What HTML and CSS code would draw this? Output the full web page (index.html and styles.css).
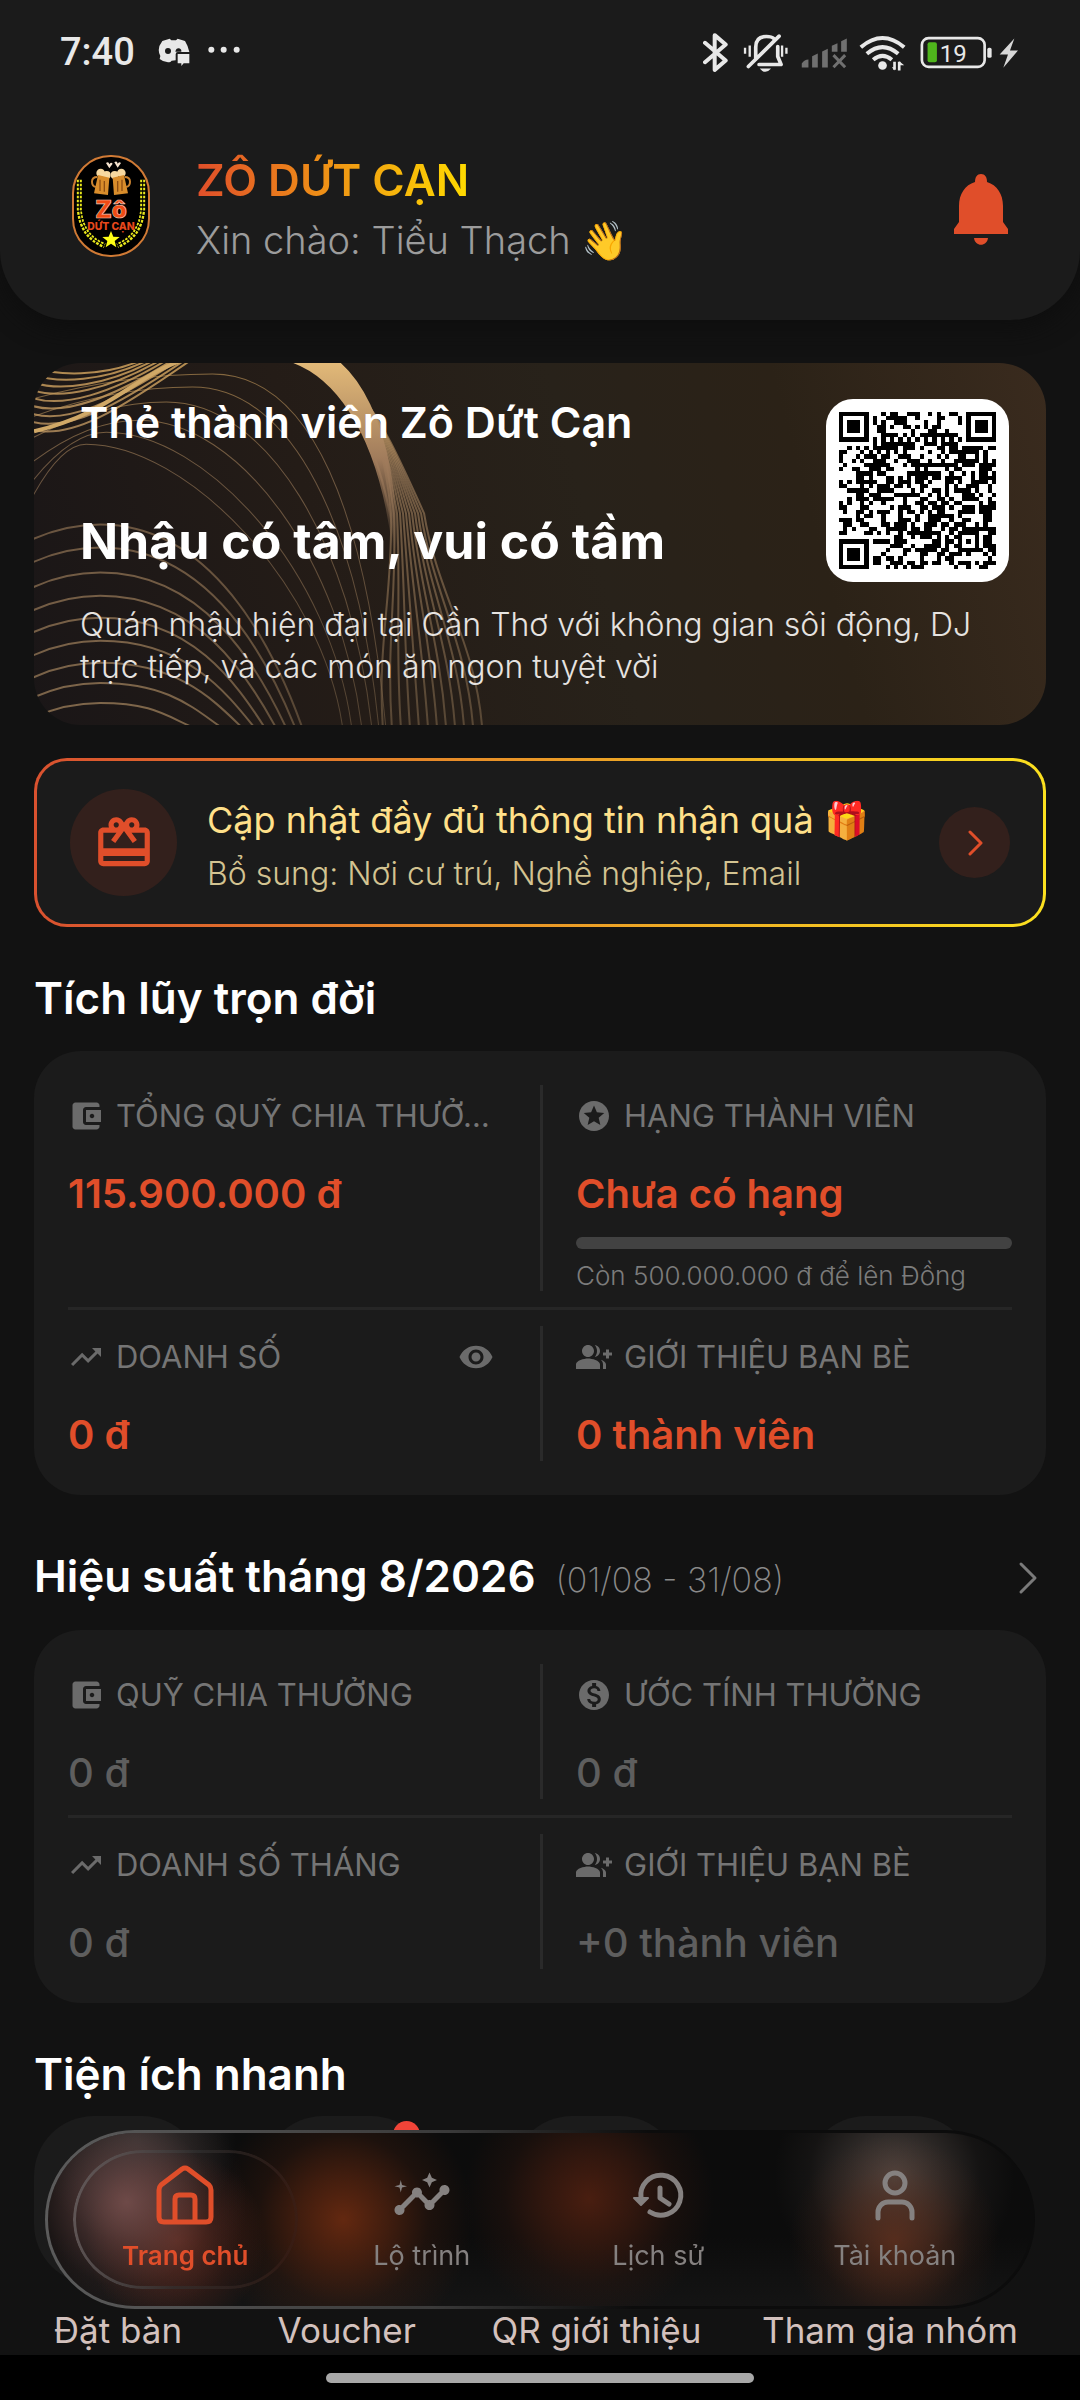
FILE: index.html
```
<!DOCTYPE html>
<html lang="vi">
<head>
<meta charset="utf-8">
<meta name="viewport" content="width=device-width, initial-scale=1">
<title>Zô Dứt Cạn</title>
<link rel="stylesheet" href="styles.css">
</head>
<body>
<svg class="sprite" aria-hidden="true">
  <symbol id="i-wallet" viewBox="0 0 24 24"><path d="M21 18v1c0 1.100-.9 2-2 2H5c-1.110 0-2-.9-2-2V5c0-1.100.89-2 2-2h14c1.100 0 2 .9 2 2v1h-9c-1.110 0-2 .9-2 2v8c0 1.100.89 2 2 2h9zm-9-2h10V8H12v8zm4-2.500c-.83 0-1.500-.67-1.500-1.500s.67-1.500 1.500-1.500 1.500.67 1.500 1.500-.67 1.500-1.500 1.500z"/></symbol>
  <symbol id="i-star" viewBox="0 0 24 24"><path d="M11.990 2C6.470 2 2 6.480 2 12s4.470 10 9.990 10C17.520 22 22 17.520 22 12S17.520 2 11.990 2zm4.240 16L12 15.450 7.770 18l1.120-4.810-3.730-3.230 4.920-.42L12 5l1.920 4.530 4.920.42-3.730 3.230L16.230 18z"/></symbol>
  <symbol id="i-trend" viewBox="0 0 24 24"><path d="M16 6l2.290 2.290-4.880 4.880-4-4L2 16.590 3.410 18l6-6 4 4 6.300-6.290L22 12V6z"/></symbol>
  <symbol id="i-group" viewBox="0 0 24 24"><path d="M22 9V7h-2v2h-2v2h2v2h2v-2h2V9zM8 12c2.210 0 4-1.790 4-4s-1.790-4-4-4-4 1.790-4 4 1.790 4 4 4zM8 13c-2.670 0-8 1.340-8 4v3h16v-3c0-2.660-5.330-4-8-4zM12.510 4.050C13.430 5.110 14 6.490 14 8s-.57 2.890-1.490 3.950C14.470 11.700 16 10.040 16 8s-1.530-3.700-3.490-3.950zM16.530 13.830C17.420 14.660 18 15.700 18 17v3h2v-3c0-1.450-1.590-2.510-3.470-3.170z"/></symbol>
  <symbol id="i-money" viewBox="0 0 24 24"><path d="M12 2C6.480 2 2 6.480 2 12s4.480 10 10 10 10-4.480 10-10S17.520 2 12 2zm1.410 16.090V20h-2.670v-1.930c-1.710-.36-3.160-1.460-3.270-3.400h1.960c.1 1.050.82 1.870 2.650 1.870 1.960 0 2.400-.98 2.400-1.590 0-.83-.44-1.610-2.670-2.140-2.480-.6-4.180-1.620-4.180-3.670 0-1.720 1.390-2.840 3.110-3.210V4h2.670v1.950c1.860.45 2.790 1.860 2.850 3.390H14.300c-.05-1.110-.64-1.870-2.220-1.870-1.500 0-2.400.68-2.400 1.640 0 .84.65 1.390 2.670 1.910s4.180 1.390 4.180 3.910c-.01 1.830-1.380 2.830-3.120 3.160z"/></symbol>
  <symbol id="i-eye" viewBox="0 0 24 24"><path d="M12 4.500C7 4.500 2.730 7.610 1 12c1.730 4.390 6 7.500 11 7.500s9.270-3.110 11-7.500c-1.730-4.390-6-7.500-11-7.500zM12 17c-2.760 0-5-2.240-5-5s2.240-5 5-5 5 2.240 5 5-2.240 5-5 5zm0-8c-1.660 0-3 1.340-3 3s1.340 3 3 3 3-1.340 3-3-1.340-3-3-3z"/></symbol>
</svg>

<header class="header">
  <div class="status">
    <div class="status-left">
      <span class="clock">7:40</span>
      <svg width="84" height="30" viewBox="0 0 252 90" fill="#e8e8e8" aria-hidden="true">
        <path d="M16 12 38 5l5 5h14l5-5 22 7q10 16 13 33H62q-6 0-6 7v18l-12 1-4 4q-18 3-32-9l2-9Q-2 35 16 12z"/>
        <circle cx="33" cy="42" r="9" fill="#1b1b1b"/><path d="M55 44q2-11 11-10 8 2 7 10z" fill="#1b1b1b"/>
        <path d="M62 51h35v28H80l-7 8v-8H62z"/>
        <circle cx="163" cy="38" r="9"/><circle cx="200" cy="38" r="9"/><circle cx="239" cy="38" r="9"/>
      </svg>
    </div>
    <svg width="317" height="42" viewBox="70 30 950 125" fill="none" stroke="#e8e8e8" stroke-width="9" aria-hidden="true">
      <path d="M76 65l62 53-33 28V42l33 28-62 53" stroke-linecap="round" stroke-linejoin="round" stroke-width="12"/>
      <path d="M206 136l92-91M228 112V78q0-32 32-32 16 0 22 6M294 76v30l10 24h-66" stroke-linecap="round" stroke-linejoin="round" stroke-width="11"/>
      <path d="M240 142h34q-17 20-34 0z" fill="#e8e8e8" stroke="none"/>
      <path d="M196 80v18M210 73v34M307 73v34M320 80v18" stroke-width="7"/>
      <g fill="#707070" stroke="none"><path d="M366 139v-12q8-12 20-12v24zM397 139v-34l17-8v42zM427 139V91l17-8v56zM456 92V74l17-8v26zM484 92V60l17-8v40z"/></g>
      <path d="M461 102l35 36M496 102l-35 36" stroke="#707070"/>
      <path d="M543 78q65-55 130 0M561 98q47-40 94 0M580 116q28-24 56 0" stroke-width="12"/>
      <circle cx="608" cy="133" r="13" fill="#e8e8e8" stroke="none"/><path d="M644 122v24M658 122v26" stroke-width="8"/><path d="M636 138h8v10zM658 120l15 12h-15z" fill="#e8e8e8" stroke="none"/>
      <rect x="726" y="51" width="188" height="86" rx="20" stroke-width="8"/>
      <rect x="743" y="63" width="28" height="60" rx="6" fill="#4fb51c" stroke="none"/>
      <rect x="922" y="80" width="13" height="30" rx="5" fill="#e8e8e8" stroke="none"/>
      <text x="820" y="121" class="battery-text">19</text>
      <path d="M1003 52l-44 48h25l-14 40 44-52h-24z" fill="#d8d8d8" stroke="none"/>
    </svg>
  </div>
  <div class="brand">
    <svg class="logo" width="78" height="102" viewBox="0 0 234 306" role="img" aria-label="Zô Dứt Cạn">
      <rect x="3" y="3" width="228" height="300" rx="112" fill="#000" stroke="#d07a35" stroke-width="6"/>
      <g fill="#f7d9a0"><circle cx="86" cy="54" r="13"/><circle cx="104" cy="60" r="12"/><circle cx="128" cy="60" r="12"/><circle cx="148" cy="54" r="13"/></g>
      <path d="M102 24q8-6 10 4 4-8 10-2l-10 14zM127 22q8-6 10 4 4-8 10-2l-10 14z" fill="#f5e3cf"/>
      <path d="M78 60l34 8-4 52-42-5zM156 60l-34 8 4 52 42-5z" fill="#d98d2b"/>
      <path d="M76 66q-16 0-16 14t12 16M158 66q16 0 16 14t-12 16" fill="none" stroke="#c9822f" stroke-width="6"/>
      <path d="M84 74v34M97 78v32M150 74v34M137 78v32" stroke="#8d4d12" stroke-width="4"/>
      <text x="117" y="189" class="logo-big">Zô</text>
      <text x="117" y="225" class="logo-small">DỨT CẠN</text>
      <path d="M22 74v90q6 80 76 108M212 74v90q-6 80-76 108" fill="none" stroke="#e8e81c" stroke-width="15" stroke-dasharray="8 4"/>
      <path d="M22 74v90q6 80 76 108M212 74v90q-6 80-76 108" fill="none" stroke="#000" stroke-width="3"/>
      <path d="M117 228l7 17 19 1-15 12 5 19-16-11-16 11 5-19-15-12 19-1z" fill="#ffff16"/>
    </svg>
    <div class="brand-text">
      <h1 class="brand-name">ZÔ DỨT CẠN</h1>
      <p class="greeting">Xin chào: Tiểu Thạch 👋</p>
    </div>
    <button class="bell" type="button" aria-label="Thông báo">
      <svg width="54" height="72" viewBox="0 0 54 72" fill="#e04e2a"><path d="M27 0c4 0 6 3 6 8 10 3 16 12 16 24v16l5 7v5H0v-5l5-7V32C5 20 11 11 21 8c0-5 2-8 6-8zM20 64h14c-1 9-13 9-14 0z"/></svg>
    </button>
  </div>
</header>

<main class="main">
  <section class="member">
    <svg class="member-art" viewBox="0 0 1012 361" preserveAspectRatio="xMinYMin slice" fill="none" aria-hidden="true">
      <defs>
        <linearGradient id="gold" x1="0" y1="0" x2="0" y2="361" gradientUnits="userSpaceOnUse"><stop offset="0" stop-color="#d9a95f"/><stop offset=".3" stop-color="#a98661"/><stop offset="1" stop-color="#7a6348"/></linearGradient>
        <linearGradient id="glow" x1="0" y1="0" x2="0" y2="190" gradientUnits="userSpaceOnUse"><stop offset="0" stop-color="#e2b978"/><stop offset=".5" stop-color="#a17c5c"/><stop offset="1" stop-color="#7a614a" stop-opacity="0"/></linearGradient>
      </defs>
      <g id="waves"></g>
      <path d="M230-8C300-4 346 70 360 190C362 70 320-16 262-16z" fill="url(#glow)" stroke="url(#glow)" stroke-width="4"/>
      <path d="M0 68C80 50 100 10 158-6" stroke="#d0a867" stroke-width="4"/>
    </svg>
    <div class="member-top">
      <div class="member-text">
        <h2 class="member-title">Thẻ thành viên Zô Dứt Cạn</h2>
        <p class="member-tagline">Nhậu có tâm, vui có tầm</p>
      </div>
      <svg class="qr" viewBox="-3 -3 43 43" shape-rendering="crispEdges" role="img" aria-label="Mã QR thành viên"><path id="qr"/></svg>
    </div>
    <p class="member-desc">Quán nhậu hiện đại tại Cần Thơ với không gian sôi động, DJ trực tiếp, và các món ăn ngon tuyệt vời</p>
  </section>

  <a class="banner" href="#profile">
    <span class="gift"><svg width="62" height="62" viewBox="0 0 24 24" fill="#e04e2a" aria-hidden="true"><path d="M20 6h-2.180c.11-.31.18-.65.18-1 0-1.660-1.340-3-3-3-1.050 0-1.960.54-2.500 1.350l-.5.67-.5-.68C10.960 2.540 10.050 2 9 2 7.340 2 6 3.340 6 5c0 .35.07.69.18 1H4c-1.110 0-1.990.89-1.990 2L2 19c0 1.110.89 2 2 2h16c1.110 0 2-.89 2-2V8c0-1.110-.89-2-2-2zm-5-2c.55 0 1 .45 1 1s-.45 1-1 1-1-.45-1-1 .45-1 1-1zM9 4c.55 0 1 .45 1 1s-.45 1-1 1-1-.45-1-1 .45-1 1-1zm11 15H4v-2h16v2zm0-5H4V8h5.080L7 10.830 8.620 12 12 7.400l3.380 4.600L17 10.830 14.920 8H20v6z"/></svg></span>
    <span class="banner-text">
      <span class="banner-title">Cập nhật đầy đủ thông tin nhận quà 🎁</span>
      <span class="banner-sub">Bổ sung: Nơi cư trú, Nghề nghiệp, Email</span>
    </span>
    <span class="go"><svg width="16" height="26" viewBox="0 0 16 26" fill="none" stroke="#e04e2a" stroke-width="3" stroke-linecap="round" stroke-linejoin="round" aria-hidden="true"><path d="M3 2l11 11L3 24"/></svg></span>
  </a>

  <div class="heading"><h2>Tích lũy trọn đời</h2></div>
  <section class="panel">
    <div class="row">
      <div class="cell">
        <h3 class="label"><svg class="icon"><use href="#i-wallet"/></svg><span>TỔNG QUỸ CHIA THƯỞ…</span></h3>
        <p class="value">115.900.000 đ</p>
      </div>
      <div class="cell">
        <h3 class="label"><svg class="icon"><use href="#i-star"/></svg><span>HẠNG THÀNH VIÊN</span></h3>
        <p class="value">Chưa có hạng</p>
        <div class="progress" role="progressbar" aria-label="Tiến độ hạng" aria-valuemin="0" aria-valuemax="500000000" aria-valuenow="0"></div>
        <p class="caption">Còn 500.000.000 đ để lên Đồng</p>
      </div>
    </div>
    <div class="row">
      <div class="cell">
        <h3 class="label"><svg class="icon"><use href="#i-trend"/></svg><span>DOANH SỐ</span><button class="eye" type="button" aria-label="Ẩn hoặc hiện doanh số"><svg class="icon"><use href="#i-eye"/></svg></button></h3>
        <p class="value">0 đ</p>
      </div>
      <div class="cell">
        <h3 class="label"><svg class="icon"><use href="#i-group"/></svg><span>GIỚI THIỆU BẠN BÈ</span></h3>
        <p class="value">0 thành viên</p>
      </div>
    </div>
  </section>

  <div class="heading heading-link">
    <h2>Hiệu suất tháng 8/2026</h2><span class="range">(01/08 - 31/08)</span>
    <button class="more" type="button" aria-label="Xem chi tiết"><svg width="20" height="34" viewBox="0 0 20 34" fill="none" stroke="#7a7a7a" stroke-width="3" stroke-linecap="round" stroke-linejoin="round"><path d="M3 3l14 14L3 31"/></svg></button>
  </div>
  <section class="panel panel-muted">
    <div class="row">
      <div class="cell">
        <h3 class="label"><svg class="icon"><use href="#i-wallet"/></svg><span>QUỸ CHIA THƯỞNG</span></h3>
        <p class="value">0 đ</p>
      </div>
      <div class="cell">
        <h3 class="label"><svg class="icon"><use href="#i-money"/></svg><span>ƯỚC TÍNH THƯỞNG</span></h3>
        <p class="value">0 đ</p>
      </div>
    </div>
    <div class="row">
      <div class="cell">
        <h3 class="label"><svg class="icon"><use href="#i-trend"/></svg><span>DOANH SỐ THÁNG</span></h3>
        <p class="value">0 đ</p>
      </div>
      <div class="cell">
        <h3 class="label"><svg class="icon"><use href="#i-group"/></svg><span>GIỚI THIỆU BẠN BÈ</span></h3>
        <p class="value">+0 thành viên</p>
      </div>
    </div>
  </section>

  <div class="heading heading-tight"><h2>Tiện ích nhanh</h2></div>
  <div class="tools">
    <a class="tool" href="#booking"><span class="tile"></span>Đặt bàn</a>
    <a class="tool" href="#voucher"><span class="tile"><i class="badge"></i></span>Voucher</a>
    <a class="tool" href="#qr"><span class="tile"></span>QR giới thiệu</a>
    <a class="tool" href="#group"><span class="tile"></span>Tham gia nhóm</a>
  </div>
</main>

<nav class="nav">
  <a class="tab tab-active" href="#home"><svg class="tab-icon" viewBox="0 0 60 60"><path d="M4 25q0-3 2-5L27 4q3-2 6 0l21 16q2 2 2 5v27q0 5-5 5H9q-5 0-5-5zM20 57V34q0-4 4-4h12q4 0 4 4v23"/></svg>Trang chủ</a>
  <a class="tab" href="#route"><svg class="tab-icon tab-fill" viewBox="0 0 24 24"><path d="M21 8c-1.450 0-2.260 1.440-1.930 2.510l-3.550 3.560c-.3-.09-.74-.09-1.040 0l-2.550-2.550C12.270 10.450 11.460 9 10 9c-1.450 0-2.270 1.440-1.930 2.520l-4.560 4.550C2.440 15.740 1 16.550 1 18c0 1.100.9 2 2 2 1.450 0 2.260-1.440 1.930-2.510l4.550-4.560c.3.09.74.09 1.040 0l2.550 2.550C12.730 16.550 13.540 18 15 18c1.450 0 2.270-1.440 1.930-2.520l3.560-3.550C21.560 12.260 23 11.450 23 10c0-1.100-.9-2-2-2zM15 9l.94-2.070L18 6l-2.060-.93L15 3l-.92 2.070L12 6l2.080.93zM3.500 11L4 9l2-.5L4 8l-.5-2L3 8l-2 .5L3 9z"/></svg>Lộ trình</a>
  <a class="tab" href="#history"><svg class="tab-icon" viewBox="0 0 60 60"><path d="M13 33a20 20 0 1 1 9 14M32 23v10l9 6"/><path d="M6 33h14l-7 7z" fill="currentColor" stroke-width="2"/></svg>Lịch sử</a>
  <a class="tab" href="#account"><svg class="tab-icon" viewBox="0 0 60 60"><circle cx="30" cy="18" r="10"/><path d="M13 53v-6a10 10 0 0 1 10-10h14a10 10 0 0 1 10 10v6"/></svg>Tài khoản</a>
</nav>
<div class="gesture"><span></span></div>
<script src="art.js"></script>
</body>
</html>
```
FILE: styles.css
```
* { box-sizing: border-box; }
body {
  margin: 0;
  background: #121212;
  color: #fff;
  font-family: Inter, "Noto Sans", sans-serif;
}
h1, h2, h3, p { margin: 0; font-weight: inherit; }
a { color: inherit; text-decoration: none; }
button { padding: 0; border: 0; background: none; color: inherit; font: inherit; }
svg { display: block; flex: none; }
.sprite { position: absolute; width: 0; height: 0; }

.header {
  padding: 0 60px 50px;
  background: #1b1b1b;
  border-radius: 0 0 70px 70px;
  box-shadow: 0 8px 24px #0e0e0e;
}
.status { display: flex; align-items: center; justify-content: space-between; height: 104px; }
.status-left { display: flex; align-items: center; gap: 22px; }
.clock { font: 500 38px Roboto, sans-serif; color: #e8e8e8; }
.battery-text { font: 400 72px Roboto, sans-serif; text-anchor: middle; fill: #e8e8e8; stroke: none; }
.brand { display: flex; align-items: center; margin-top: 46px; padding: 0 12px; }
.logo { margin-bottom: 8px; }
.logo-big { font: 900 72px Inter, sans-serif; text-anchor: middle; fill: #f04a14; stroke: #f4c9b8; stroke-width: 2px; }
.logo-small { font: 800 31px Inter, sans-serif; text-anchor: middle; fill: #e8481c; }
.brand-text { flex: 1; padding-left: 46px; line-height: 60px; }
.brand-name {
  width: max-content;
  font-size: 44px;
  font-weight: 600;
  background: linear-gradient(90deg, #e04e2a, #ffdb00);
  background-clip: text;
  color: transparent;
}
.greeting { font-size: 38px; font-weight: 300; color: #9c9c9c; }

.main { padding: 43px 34px 45px; }

.member {
  position: relative;
  overflow: hidden;
  padding: 29px 37px 37px 46px;
  border-radius: 47px;
  background: linear-gradient(75deg, #1a1617, #241c17 30%, #28221a 55%, #2b2217 75%, #3a2b1e);
}
.member-art { position: absolute; inset: 0; width: 100%; height: 100%; }
.member-top { position: relative; display: flex; justify-content: space-between; }
.member-title { font-size: 43px; font-weight: 600; line-height: 60px; }
.member-tagline { margin-top: 57px; font-size: 50px; font-weight: 700; line-height: 64px; }
.member-desc { position: relative; margin-top: 22px; font-size: 32px; font-weight: 300; line-height: 42px; color: #e6e3e0; }
.qr { width: 183px; height: 183px; margin-top: 7px; border-radius: 27px; background: #fff; }

.banner {
  display: flex;
  align-items: center;
  gap: 30px;
  min-height: 169px;
  margin-top: 33px;
  padding: 0 33px;
  border: 3px solid transparent;
  border-radius: 33px;
  background: linear-gradient(#1b1b1b, #1b1b1b) padding-box, linear-gradient(90deg, #d9512f, #fbe01f) border-box;
}
.gift, .go { display: grid; place-items: center; flex: none; border-radius: 50%; background: #33201c; }
.gift { width: 107px; height: 107px; }
.go { width: 71px; height: 71px; }
.banner-text { flex: 1; display: flex; flex-direction: column; padding-top: 8px; line-height: 53px; }
.banner-title { font-size: 36px; font-weight: 400; color: #ffe08a; }
.banner-sub { font-size: 32px; font-weight: 300; color: #d3c391; }

.heading { display: flex; align-items: baseline; margin: 41px 0 23px; line-height: 60px; }
.heading h2 { font-size: 44px; font-weight: 600; }
.heading-link { padding: 10px 0; margin-bottom: 10px; }
.heading-tight { margin-bottom: 12px; }
.range { margin-left: 20px; font-size: 34px; font-weight: 200; color: #8a8a8a; }
.more { align-self: center; margin: 0 8px 0 auto; }

.panel { padding: 34px; border-radius: 47px; background: #1b1b1b; }
.row { display: grid; grid-template-columns: 1fr 1fr; }
.row + .row { margin-top: 16px; padding-top: 16px; border-top: 3px solid #262626; }
.cell { min-width: 0; padding: 8px 46px 0 0; }
.cell + .cell { padding: 8px 0 0 33px; border-left: 3px solid #2a2a2a; }
.label { display: flex; align-items: center; gap: 12px; height: 46px; font-size: 31px; font-weight: 400; color: #757575; }
.label span { white-space: nowrap; line-height: 46px; }
.icon { width: 36px; height: 36px; fill: #6b6b6b; }
.eye { margin-left: auto; }
.value { margin-top: 28px; font-size: 40px; font-weight: 600; line-height: 53px; color: #e04e2a; }
.panel-muted .value { font-weight: 500; color: #5e5e5e; }
.progress { height: 12px; margin: 17px 0 12px; border-radius: 6px; background: #424242; }
.caption { font-size: 26px; font-weight: 300; line-height: 30px; color: #7c7c7c; }

.tools { display: flex; justify-content: space-between; padding-right: 28px; }
.tool { display: flex; flex-direction: column; align-items: center; gap: 22px; font-size: 35px; line-height: 48px; color: #d3c1bd; }
.tile { position: relative; width: 168px; height: 168px; border-radius: 60px; background: #1b1b1b; }
.badge { position: absolute; top: 5px; right: 11px; width: 27px; height: 27px; border-radius: 50%; background: #f04438; }

.nav {
  position: fixed;
  left: 45px;
  right: 45px;
  bottom: 91px;
  display: flex;
  height: 179px;
  padding: 17px 19px;
  border: 3px solid transparent;
  border-radius: 90px;
  background:
    radial-gradient(circle at 8% 40%, #6e4a48, #6e4a4877 50px, #6e4a4822 85px, #6e4a4800 120px) padding-box,
    radial-gradient(circle at 13% 62%, #7a3020aa, #7a302055 45px, #7a302000 90px) padding-box,
    radial-gradient(circle at 9% 5%, #4a4a4a88, #4a4a4a00 100px) padding-box,
    radial-gradient(circle at 30% 50%, #632810, #63281099 45px, #63281033 85px, #63281000 130px) padding-box,
    radial-gradient(circle at 55% 38%, #491e10, #491e1099 45px, #491e1033 85px, #491e1000 125px) padding-box,
    radial-gradient(circle at 86% 62%, #62301dcc, #62301d77 40px, #62301d22 75px, #62301d00 105px) padding-box,
    radial-gradient(circle at 86% 25%, #4e4541, #4e454177 50px, #4e454122 85px, #4e454100 120px) padding-box,
    linear-gradient(#0c0c0c 60%, #141414) padding-box,
    linear-gradient(95deg, #5c5c5c, #3a3a3a 40%, #0c0c0c 60%) border-box;
}
.tab {
  position: relative;
  flex: 1;
  display: flex;
  flex-direction: column;
  align-items: center;
  gap: 13px;
  padding-top: 15px;
  font-size: 27px;
  line-height: 36px;
  color: #858180;
}
.tab-active { color: #e04e2a; font-size: 26px; font-weight: 600; }
.tab-active::before {
  content: "";
  position: absolute;
  inset: 0 6px;
  padding: 3px;
  border-radius: 70px;
  background: linear-gradient(100deg, #645a5a, #33333399 50%, #3a1c1499);
  mask: linear-gradient(#000 0 0) content-box exclude, linear-gradient(#000 0 0);
}
.tab-icon { width: 60px; height: 60px; fill: none; stroke: currentColor; stroke-width: 5px; stroke-linecap: round; stroke-linejoin: round; }
.tab-fill { fill: currentColor; stroke: none; }

.gesture { position: fixed; left: 0; right: 0; bottom: 0; display: grid; place-items: center; height: 45px; background: #000; }
.gesture span { width: 428px; height: 10px; border-radius: 5px; background: #a8a8a8; }
```
FILE: art.js
```
// Member code: finder, alignment and timing marks round the data modules.
const size = 37;
let state = 20260801;
const next = () => (state = (state * 1103515245 + 12345) % 2147483648) / 2147483648;
const ring = (x, y, cx, cy) => Math.max(Math.abs(x - cx), Math.abs(y - cy));
let modules = '';
for (let y = 0; y < size; y++) {
  for (let x = 0; x < size; x++) {
    let dark = next() < 0.52;
    for (const [cx, cy] of [[3, 3], [33, 3], [3, 33]]) {
      const r = ring(x, y, cx, cy);
      if (r <= 4) dark = r !== 2 && r !== 4;
    }
    const a = ring(x, y, 30, 30);
    if (a <= 2) dark = a !== 1;
    if ((y === 6 && x > 7 && x < 29) || (x === 6 && y > 7 && y < 29)) dark = (x + y) % 2 === 0;
    if (dark) modules += `M${x} ${y}h1v1h-1z`;
  }
}
document.getElementById('qr').setAttribute('d', modules);

// Gold wave lines of the member card.
const waves = document.getElementById('waves');
const line = (d, width, opacity) => {
  const p = document.createElementNS('http://www.w3.org/2000/svg', 'path');
  p.setAttribute('d', d);
  p.setAttribute('stroke', 'url(#gold)');
  p.setAttribute('stroke-width', width);
  p.setAttribute('stroke-opacity', opacity);
  waves.append(p);
};
const arcs = [[161, 268], [184, 261], [209, 252], [232, 242], [254, 231], [277, 221], [299, 209], [319, 189], [339, 162]];
arcs.forEach(([top, end], i) =>
  line(`M-4 ${top + 16}Q30 ${top} 66 ${top}C${66 + (end - 66) * 0.55} ${top} ${end - 30} ${top + (361 - top) * 0.6} ${end} 365`, 2, 0.6 + i * 0.05));
const hills = [[178, 11, 351], [158, 24, 344], [132, 39, 337], [105, 57, 327], [72, 69, 317], [52, 81, 308]];
hills.forEach(([x, y, end]) =>
  line(`M-4 ${y + 70 - x / 4}Q${x / 2} ${y} ${x} ${y}C${x + 100} ${y} ${end - 20} ${y + 140} ${end} 365`, 1, 0.55));
for (let i = 0; i < 12; i++) {
  const end = 348 + i * 9;
  line(`M240-12C320-10 348 60 ${356 + i * 3} 150C${358 + i * 4} 230 ${end - 6} 280 ${end} 365`, 2, 0.6);
}
for (let i = 0; i < 9; i++) {
  line(`M-4 ${2 + i * 8}C${20 + i * 2} ${14 + i * 8} ${70 + i * 2} ${14 + i * 4} ${110 + i * 6} -4`, 2, 0.8);
}
```
